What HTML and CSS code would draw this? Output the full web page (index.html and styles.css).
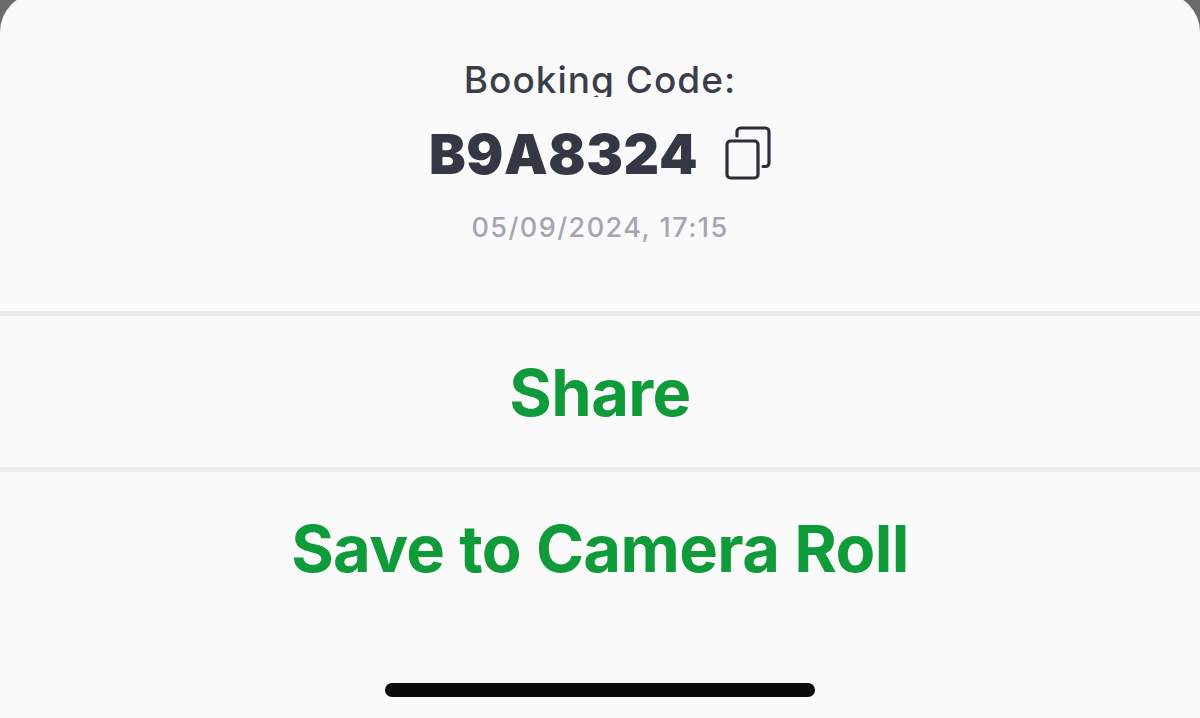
FILE: index.html
```html
<!DOCTYPE html>
<html lang="en">
<head>
  <meta charset="UTF-8" />
  <meta name="viewport" content="width=device-width, initial-scale=1" />
  <title>Booking Code</title>
  <link rel="stylesheet" href="styles.css">
</head>
<body>

<div class="sheet">
  <div class="booking">
    <div class="booking-label">Booking Code:</div>
    <div class="booking-row">
      <span class="booking-code">B9A8324</span>
      <svg class="copy-icon" width="46" height="54" viewBox="0 0 46 54" fill="none" stroke="#2b2f38" stroke-width="3.2">
        <rect x="2" y="15" width="31" height="37" rx="3.5" />
        <path d="M12 10V5.500C12 3.600 13.600 2 15.500 2H40.500C42.400 2 44 3.600 44 5.500V37C44 39 42.400 40.500 40.500 40.500H38" stroke-linecap="round" />
      </svg>
    </div>
    <div class="booking-date">05/09/2024, 17:15</div>
  </div>
  <button class="action action-share" type="button">Share</button>
  <button class="action action-save" type="button">Save to Camera Roll</button>
  <div class="home-bar"></div>
</div>

</body>
</html>
```

FILE: styles.css
```css
html, body {
  margin: 0;
  height: 100%;
}
body {
  background: #6b6b6b;
  font-family: Inter, "Liberation Sans", sans-serif;
  overflow: hidden;
}
/* top of the sheet runs slightly past the crop, so the corners look cut */
.sheet {
  height: 725px;
  margin-top: -7px;
  background: #fafafb;
  border-radius: 39px 39px 0 0;
  display: flex;
  flex-direction: column;
}
.booking {
  height: 318px;
  box-sizing: border-box;
  padding-top: 64px;
  display: flex;
  flex-direction: column;
  align-items: center;
}
.booking-label {
  height: 40px;
  line-height: 46px;
  overflow: hidden;
  font-size: 37px;
  font-weight: 500;
  letter-spacing: 1px;
  color: #3a3e4a;
}
.booking-row {
  margin-top: 29px;
  display: flex;
  align-items: center;
  gap: 27px;
  height: 54px;
}
.booking-code {
  padding-top: 2px;
  font-size: 55px;
  font-weight: 900;
  letter-spacing: 0.6px;
  line-height: 54px;
  color: #343844;
}
.copy-icon {
  display: block;
}
.booking-date {
  margin-top: 32px;
  font-size: 27px;
  line-height: 32px;
  font-weight: 500;
  letter-spacing: 1.45px;
  color: #a3a5b0;
}
.action {
  display: block;
  width: 100%;
  padding: 2px 0 0;
  background: none;
  border: none;
  border-top: 5px solid #ebebef;
  font-family: inherit;
  font-size: 65px;
  font-weight: 700;
  letter-spacing: -0.6px;
  color: #0f9b3a;
  text-align: center;
  cursor: pointer;
}
.action-share {
  height: 156px;
}
.action-save {
  height: 156px;
}
.home-bar {
  width: 430px;
  height: 14px;
  margin: 60px auto 0;
  border-radius: 7px;
  background: #0a0a0c;
}
```
